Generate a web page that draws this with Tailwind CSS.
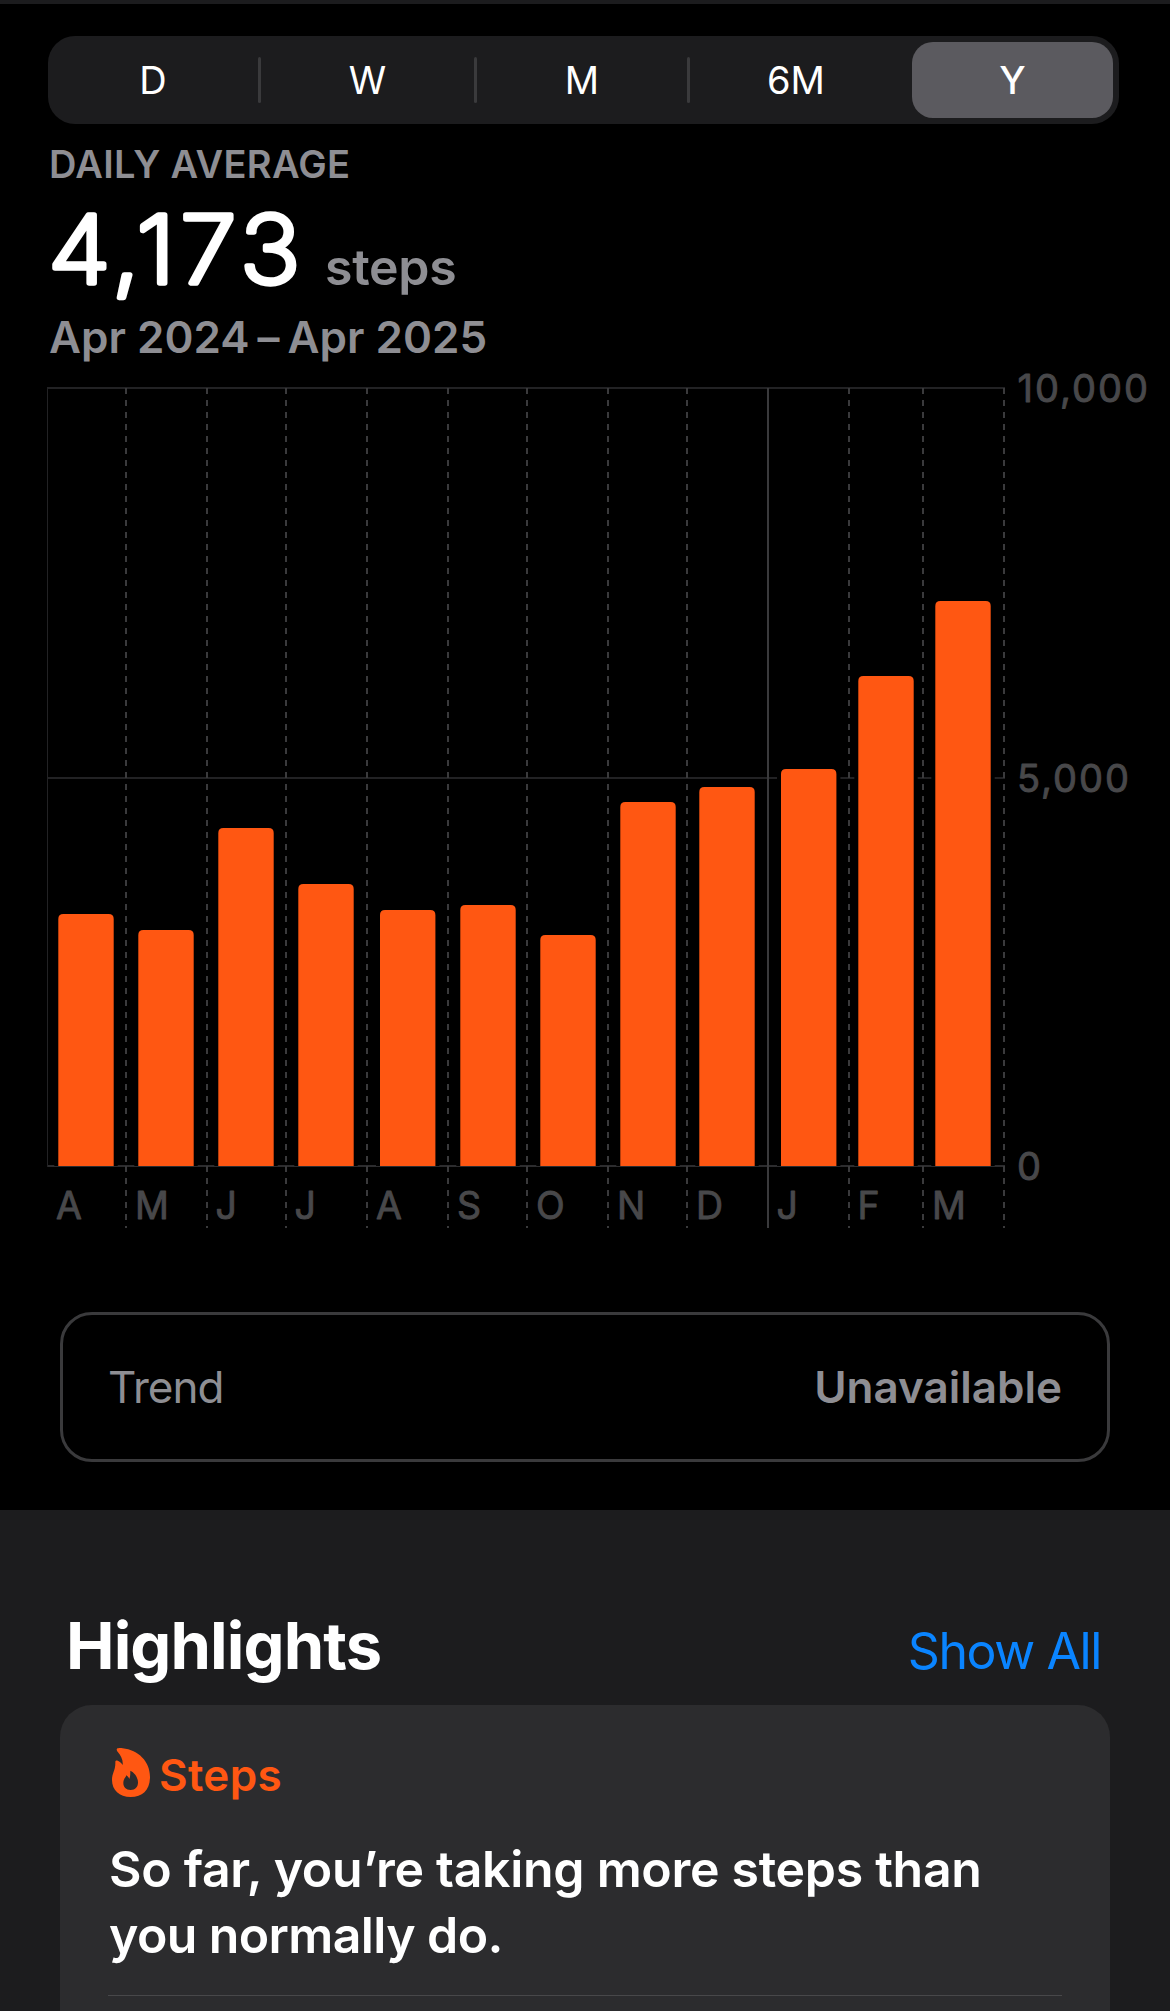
<!DOCTYPE html>
<html lang="en">

<head>
  <meta charset="UTF-8">
  <meta name="viewport" content="width=device-width, initial-scale=1.0">
  <title>Steps</title>
  <script src="https://cdn.jsdelivr.net/npm/@tailwindcss/browser@4"></script>
</head>

<body class="bg-black w-[1170px] h-[2011px] overflow-hidden font-['Inter','Liberation_Sans',sans-serif] text-white">
  <div class="h-1 bg-[#1c1c1e]"></div>

  <main class="h-[1506px] pt-8">
    <!-- range picker -->
    <div class="ml-12 w-[1071px] h-[88px] p-1.5 flex items-center rounded-[27px] bg-[#1c1c1e] text-[38px]">
      <button class="w-[204px] pr-1.5">D</button>
      <div class="w-[3px] h-[46px] rounded-full bg-[#3a3a3c]"></div>
      <button class="w-[213px]">W</button>
      <div class="w-[3px] h-[46px] rounded-full bg-[#3a3a3c]"></div>
      <button class="w-[210px]">M</button>
      <div class="w-[3px] h-[46px] rounded-full bg-[#3a3a3c]"></div>
      <button class="w-[222px] pr-2.5">6M</button>
      <button class="w-[201px] h-[76px] rounded-[21px] bg-[#5b5a5f] font-medium">Y</button>
    </div>

    <div class="pt-4 pl-12">
      <p class="h-[50px] pl-px leading-[49px] text-[38px] font-semibold tracking-[0.3px] text-[#8e8e93]">DAILY AVERAGE</p>
      <svg class="block w-[500px] h-[121px]" viewBox="48 190 500 121">
        <text transform="scale(1.08 1)" x="44.6" y="283" font-size="94" font-weight="200" letter-spacing="4.8" fill="#fff" stroke="#fff" stroke-width="5.5" stroke-linejoin="round" stroke-linecap="round">4,173</text>
        <text x="325" y="285" font-size="50" font-weight="600" letter-spacing="-0.3" fill="#8e8e93">steps</text>
      </svg>
      <p class="h-[52px] pl-px leading-[52px] text-[44px] font-semibold text-[#8e8e93]">Apr 2024<span class="mx-2">–</span>Apr 2025</p>
    </div>

    <!-- chart -->
    <svg class="block w-[1170px] h-[877px]" viewBox="0 363 1170 877">
      <g fill="none" stroke="#222224" stroke-width="2">
        <path d="M48 388H1005M48 778H1005" />
        <path stroke="#2c2c2e" d="M48 1166H1005" />
        <path stroke-width="1" d="M47.5 387V1167" />
      </g>
      <g fill="none" stroke="#3a3a3c" stroke-width="2" stroke-dasharray="6 6">
        <path d="M126 388V1166M207 388V1166M286 388V1166M367 388V1166M448 388V1166M527 388V1166M608 388V1166M687 388V1166M849 388V1166M923 388V1166M1004 388V1166" />
        <path d="M126 1166V1228M207 1166V1228M286 1166V1228M367 1166V1228M448 1166V1228M527 1166V1228M608 1166V1228M687 1166V1228M849 1166V1228M923 1166V1228M1004 1166V1228" />
      </g>
      <path d="M768 388V1228" stroke="#3a3a3c" stroke-width="2" />
      <g id="bars"></g>
      <g id="months" font-size="37.5" fill="#48484a" stroke="#48484a" stroke-width="0.9" stroke-linejoin="round"></g>
      <g font-size="38" letter-spacing="2" fill="#48484a" stroke="#48484a" stroke-width="0.9" stroke-linejoin="round">
        <text x="1017.5" y="402">10,000</text>
        <text x="1017" y="792">5,000</text>
        <text x="1017" y="1180">0</text>
      </g>
    </svg>

    <div class="mt-[72px] mx-[60px] h-[150px] px-[45px] flex items-center justify-between rounded-[32px] border-3 border-[#3a3a3c] text-[44px] text-[#8e8e93]">
      <span class="tracking-[-1px]">Trend</span>
      <span class="font-semibold">Unavailable</span>
    </div>
  </main>

  <section class="h-[501px] pt-24 px-[60px] overflow-hidden bg-[#1c1c1e]">
    <div class="h-20 pl-[6px] pr-[9px] flex items-baseline justify-between leading-[80px]">
      <h2 class="text-[65px] font-bold tracking-[-0.9px]">Highlights</h2>
      <a class="text-[50px] tracking-[-1.4px] text-[#0a84ff]">Show All</a>
    </div>

    <div class="mt-[19px] h-[400px] pt-[43px] px-12 rounded-[32px] bg-[#2c2c2e]">
      <div class="h-[54px] flex pl-1 gap-[9px] text-[#ff5712]">
        <svg class="w-[38px] h-[49px]" viewBox="66 54 114 147" fill="currentColor">
          <path fill-rule="evenodd" d="M81 56C84 54 92 54 98 55C145 60 180 95 180 140C180 180 158 201 122 201C88 201 66 180 66 150C66 130 77 120 76 97C75 92 82 90 86 94C91 97 96 102 98 105C100 90 92 76 84 67C80 62 79 58 81 56ZM121 122C134 128 144 143 144 157C144 171 136 180 122 180C108 180 100 171 100 159C100 147 107 143 109 136C113 139 117 143 118 147C121 139 121 130 121 122Z" />
        </svg>
        <span class="leading-[54px] text-[44px] font-semibold tracking-[0.3px]">Steps</span>
      </div>
      <p class="mt-[34px] pl-px leading-[66px] text-[50px] font-semibold whitespace-nowrap">
        <span class="block tracking-[-0.3px]">So far, you’re taking more steps than</span>
        <span class="block tracking-[-0.6px]">you normally do.</span>
      </p>
      <div class="mt-[27px] h-px bg-[#48484a]"></div>
    </div>
  </section>

  <script>
    // x of the bar, y of its top, label, x of the label
    const months = [
      [58.3, 914, "A", 56],
      [138.3, 930, "M", 135],
      [218.3, 828, "J", 215.5],
      [298.3, 884, "J", 294.5],
      [380, 910, "A", 376],
      [460.3, 905, "S", 457],
      [540.3, 935, "O", 536],
      [620.3, 802, "N", 617],
      [699.3, 787, "D", 696],
      [781, 769, "J", 776.5],
      [858.3, 676, "F", 857.5],
      [935.3, 601, "M", 932],
    ];
    const barWidth = 55.4;
    const baseline = 1166;

    let bars = "";
    let labels = "";

    for (let [x, top, label, labelX] of months) {
      // black halo hides the grid next to the bar
      bars += `<rect x="${x - 4}" y="${top - 4}" width="${barWidth + 8}" height="${baseline - top + 4}" fill="#000"/>`;
      bars += `<path d="M${x} ${baseline}V${top + 5}q0-5 5-5h${barWidth - 10}q5 0 5 5V${baseline}z" fill="#ff5712"/>`;
      labels += `<text x="${labelX}" y="1218.5">${label}</text>`;
    }

    document.getElementById("bars").innerHTML = bars;
    document.getElementById("months").innerHTML = labels;
  </script>
</body>

</html>
